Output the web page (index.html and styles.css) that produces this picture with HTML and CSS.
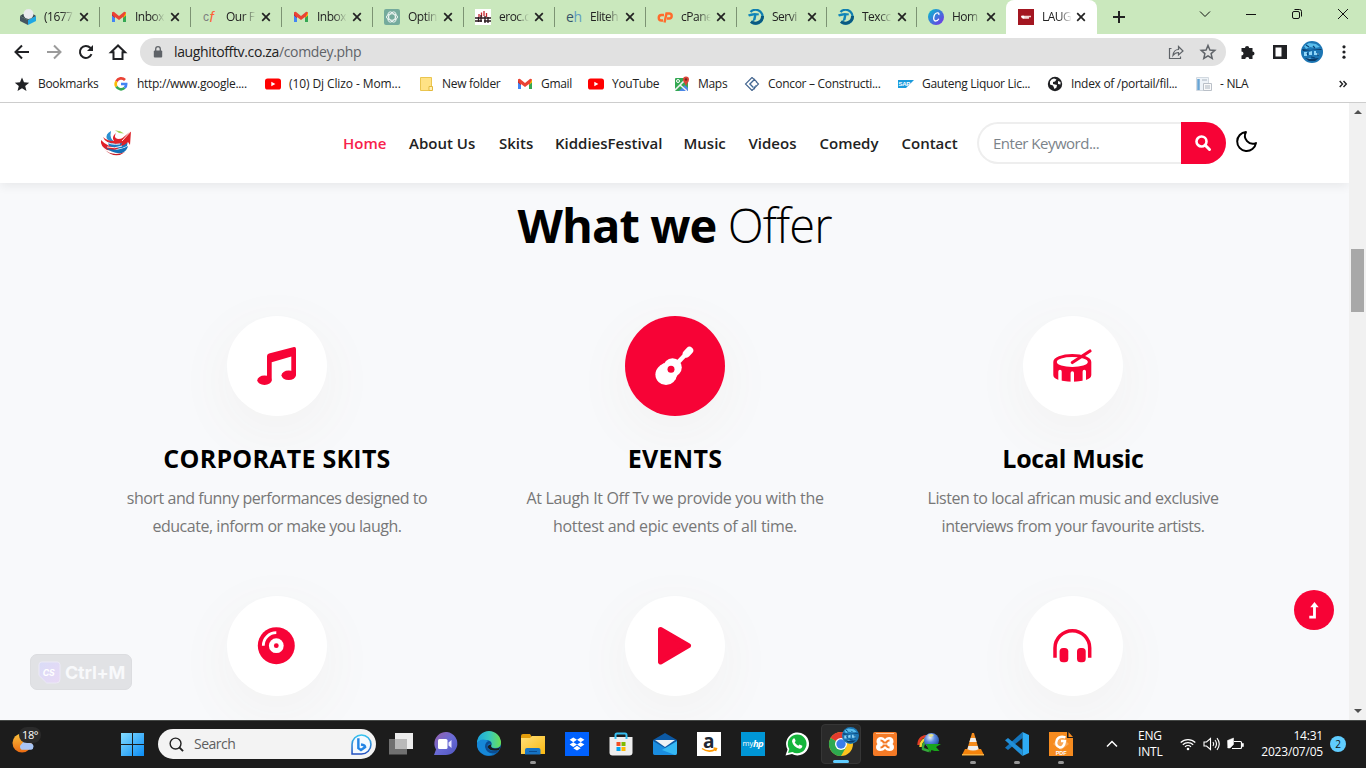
FILE: index.html
```html
<!DOCTYPE html>
<html lang="en">
<head>
    <meta charset="UTF-8">
    <meta name="viewport" content="width=device-width, initial-scale=1.0">
    <title>LAUGH IT OFF TV</title>
    <link rel="stylesheet" href="styles.css">
</head>
<body>

<!-- shared icons -->
<svg class="defs" width="0" height="0">
    <defs>
        <linearGradient id="gSun" x1="0" y1="0" x2="0" y2="1"><stop offset="0" stop-color="#fbc13c"/><stop offset="1" stop-color="#ea6a12"/></linearGradient>
        <linearGradient id="gWin" x1="0" y1="0" x2="1" y2="1"><stop offset="0" stop-color="#84dcff"/><stop offset="1" stop-color="#0a8cf5"/></linearGradient>
        <linearGradient id="gEdge" x1="0" y1="0" x2="1" y2="0"><stop offset="0" stop-color="#1ba5e0"/><stop offset=".5" stop-color="#36c6c0"/><stop offset="1" stop-color="#6be052"/></linearGradient>
        <linearGradient id="gCanva" x1="0" y1="0" x2="1" y2="1"><stop offset="0" stop-color="#00c4cc"/><stop offset="1" stop-color="#7d2ae8"/></linearGradient>
        <linearGradient id="gChat" x1="0" y1="0" x2="1" y2="1"><stop offset="0" stop-color="#9a5fa8"/><stop offset=".5" stop-color="#6a6bd6"/><stop offset="1" stop-color="#4f56c0"/></linearGradient>
        <linearGradient id="gBing" x1="0" y1="0" x2="0" y2="1"><stop offset="0" stop-color="#36c5f0"/><stop offset="1" stop-color="#2450c0"/></linearGradient>
        <linearGradient id="gCs" x1="0" y1="0" x2="1" y2="1"><stop offset="0" stop-color="#d9dcf7"/><stop offset="1" stop-color="#e9d9f5"/></linearGradient>
        <linearGradient id="gFolder" x1="0" y1="0" x2="1" y2="1"><stop offset="0" stop-color="#ffe07a"/><stop offset="1" stop-color="#fbb810"/></linearGradient>
        <radialGradient id="gGlobe" cx=".4" cy=".3" r=".8"><stop offset="0" stop-color="#e6eefc"/><stop offset=".4" stop-color="#5b8ae0"/><stop offset="1" stop-color="#123a8c"/></radialGradient>
    </defs>
    <symbol id="close" viewBox="0 0 10 10"><path d="M1.2 1.2l7.6 7.6M8.8 1.2L1.2 8.8" stroke="#222" stroke-width="1.7"/></symbol>
    <symbol id="gmail" viewBox="0 0 16 16">
        <path d="M1 5v8h3V7z" fill="#4285f4"/><path d="M12 7v6h3V5z" fill="#34a853"/>
        <path d="M1 3.600L4 5v4L1 6.500z" fill="#c5221f"/><path d="M15 3.600L12 5v4l3-2.500z" fill="#fbbc04"/>
        <path d="M1 3.500Q2.500 2 4 3.800L8 7l4-3.200Q13.500 2 15 3.500L12 9V8L8 11 4 8v1L1 5z" fill="#ea4335"/>
    </symbol>
    <symbol id="youtube" viewBox="0 0 16 12"><rect y="0.500" width="16" height="11" rx="2.600" fill="#f00"/><path d="M6.300 3.700L10.400 6 6.300 8.300z" fill="#fff"/></symbol>
    <symbol id="texco" viewBox="0 0 16 16">
        <path d="M2.500 3A7 7 0 1 1 3 13" fill="none" stroke="#0f7fb0" stroke-width="2.200"/>
        <path d="M3 12.500A7 7 0 0 0 14.500 7" fill="none" stroke="#0a5a82" stroke-width="3"/>
        <path d="M0 5.500Q5 3 11 4.500L10.500 6.500 8.500 6.300 7.500 11l-3 1.500L6 6.500 1 7.500z" fill="#1286b8"/>
    </symbol>
    <symbol id="avatar" viewBox="0 0 22 22">
        <circle cx="11" cy="11" r="11" fill="#1c76b4"/>
        <path d="M3 5l5-3 7 1 4 3-5 1-5-1-4 2z" fill="#58bdec"/><path d="M3 11h3v4H3zM8 11l3-1v4H8zM13 10h2v2h3v2h-5zM5 18l4-1 2 2z" fill="#8fd6f8"/><path d="M1 8l8 1 11-1 1 1-9 0-10 1zM4 17l6 1 8-1-4 3H8z" fill="#0a3a68"/><path d="M5 4l3 2M6 12l1 2M12 5l2 2M17 12v3M10 16l4 1" stroke="#0b4377" stroke-width="1.200"/>
    </symbol>
</svg>

<div class="tabs">
    <div class="tab">
        <svg viewBox="0 0 16 16"><path d="M0 7l8 4v5l-8-4z" fill="#455560"/><path d="M16 7l-8 4v5l8-4z" fill="#1ea7e4"/><path d="M0 7l3-2 10 0 3 2-8 4z" fill="#37474f"/><circle cx="8.500" cy="5" r="5" fill="#e9e9ee"/></svg>
        <span>(1677</span><svg class="x"><use href="#close"/></svg>
    </div>
    <div class="tab"><svg><use href="#gmail"/></svg><span>Inbox</span><svg class="x"><use href="#close"/></svg></div>
    <div class="tab">
        <svg viewBox="0 0 16 16"><text x="1" y="12" class="cf-c">c</text><text x="7.500" y="13" class="cf-f">f</text></svg>
        <span>Our F</span><svg class="x"><use href="#close"/></svg>
    </div>
    <div class="tab"><svg><use href="#gmail"/></svg><span>Inbox</span><svg class="x"><use href="#close"/></svg></div>
    <div class="tab">
        <svg viewBox="0 0 16 16"><rect width="16" height="16" rx="2" fill="#74aa9c"/><g fill="none" stroke="#fff" stroke-width=".8"><ellipse cx="8" cy="8" rx="5.600" ry="3.200"/><ellipse cx="8" cy="8" rx="5.600" ry="3.200" transform="rotate(60 8 8)"/><ellipse cx="8" cy="8" rx="5.600" ry="3.200" transform="rotate(120 8 8)"/></g></svg>
        <span>Optin</span><svg class="x"><use href="#close"/></svg>
    </div>
    <div class="tab">
        <svg viewBox="0 0 16 16"><rect width="16" height="16" fill="#fff"/><path d="M4 8V5M6.500 8V3.500M9 7V2M11.500 8V4" stroke="#c4262e" stroke-width="1.300"/><path d="M0 9h16M0 12h7M9 12h7M3.500 8v5M6 6v7M10 7v7M13 8v6" stroke="#2a1a1f" stroke-width="1.300"/></svg>
        <span>eroc.c</span><svg class="x"><use href="#close"/></svg>
    </div>
    <div class="tab">
        <svg viewBox="0 0 16 16"><text x="0" y="13" class="eh" fill="#37556b">e</text><text x="7.500" y="13" class="eh" fill="#5f9dc0">h</text></svg>
        <span>Eliteh</span><svg class="x"><use href="#close"/></svg>
    </div>
    <div class="tab">
        <svg viewBox="0 0 16 16"><g fill="none" stroke="#ff6c2c" stroke-width="2.400"><path d="M7 6H4.500a2.700 2.700 0 0 0 0 5.500H6"/><path d="M7.500 13.500L9.500 4.500h2.700a2.400 2.400 0 0 1 0 5H10"/></g></svg>
        <span>cPane</span><svg class="x"><use href="#close"/></svg>
    </div>
    <div class="tab"><svg><use href="#texco"/></svg><span>Servi</span><svg class="x"><use href="#close"/></svg></div>
    <div class="tab"><svg><use href="#texco"/></svg><span>Texcc</span><svg class="x"><use href="#close"/></svg></div>
    <div class="tab last">
        <svg viewBox="0 0 16 16"><circle cx="8" cy="8" r="8" fill="url(#gCanva)"/><path d="M10.800 6c.6-1.800-.8-2.600-2.300-2C5.500 5 4.500 11.800 7.500 12c1.600 0 2.700-1 3.300-2.200" fill="none" stroke="#fff" stroke-width="1.300"/></svg>
        <span>Hom</span><svg class="x"><use href="#close"/></svg>
    </div>
    <div class="tab active">
        <svg viewBox="0 0 16 16"><rect width="16" height="16" fill="#a31621"/><path d="M3 7.500h10M5 9h6" stroke="#f0d5d5" stroke-width="1.300"/><circle cx="5" cy="8" r="1.500" fill="#fff"/></svg>
        <span>LAUG</span><svg class="x"><use href="#close"/></svg>
    </div>
    <svg class="plus" viewBox="0 0 12 12"><path d="M6 0v12M0 6h12" stroke="#222" stroke-width="2"/></svg>
    <div class="window-buttons">
        <svg viewBox="0 0 12 12"><path d="M1 3.500l5 5 5-5" class="line"/></svg>
        <svg viewBox="0 0 12 12"><path d="M1 6.500h10" class="line"/></svg>
        <svg viewBox="0 0 12 12"><rect x="1.500" y="3.500" width="7" height="7" rx="1.500" class="line"/><path d="M3.500 1.500h5a2 2 0 0 1 2 2v5" class="line"/></svg>
        <svg viewBox="0 0 12 12"><path d="M1 1l10 10M11 1L1 11" class="line"/></svg>
    </div>
</div>

<div class="toolbar">
    <svg class="tool" viewBox="0 0 16 16"><path d="M15 8H2M8 1.500L1.500 8 8 14.500" class="dark"/></svg>
    <svg class="tool" viewBox="0 0 16 16"><path d="M1 8h13M8 1.500L14.500 8 8 14.500" class="gray"/></svg>
    <svg class="tool" viewBox="0 0 16 16"><path d="M13.500 10.200A6 6 0 1 1 12.300 3.800L14 5.500" class="dark"/><path d="M15 1v6H9z" fill="#202124"/></svg>
    <svg class="tool" viewBox="0 0 16 16"><path d="M8 1.500L1 8.200h2.500V15h9V8.200H15z" class="dark"/></svg>
    <div class="address">
        <svg class="lock" viewBox="0 0 10 12"><rect x="0.800" y="4.500" width="8.400" height="7" rx="1" fill="#5f6368"/><path d="M2.700 5V3a2.300 2.300 0 0 1 4.600 0v2" fill="none" stroke="#5f6368" stroke-width="1.300"/></svg>
        <p>laughitofftv.co.za<span>/comdey.php</span></p>
        <svg class="share" viewBox="0 0 16 16"><path d="M3.500 4.500H1.500v10h11v-2M5 11.500C5.500 7 8 5.500 10.500 5.500V2.500L15 7l-4.500 4V8.500C8 8.500 6.500 9.500 5 11.500z" fill="none" stroke="#5f6368" stroke-width="1.200"/></svg>
        <svg class="star" viewBox="0 0 16 16"><path d="M8 1.500l1.900 4.500 4.900.4-3.700 3.200 1.100 4.800L8 11.800l-4.200 2.600 1.100-4.800L1.200 6.400 6.100 6z" fill="none" stroke="#5f6368" stroke-width="1.500"/></svg>
    </div>
    <svg class="tool" viewBox="0 0 16 16"><path d="M1.500 4H5a2 2 0 1 1 4.200 0H12.500v3.500a2 2 0 1 1 0 4V15H9.300a2 2 0 0 0-4 0H1.500v-3.500a2 2 0 1 0 0-4z" fill="#202124"/></svg>
    <svg class="tool" viewBox="0 0 16 16"><path d="M1 1h14v14H1zM3.500 3.500v9H9.500v-9z" fill="#202124" fill-rule="evenodd"/></svg>
    <svg class="me"><use href="#avatar"/></svg>
    <svg class="dots" viewBox="0 0 4 14"><circle cx="2" cy="1.800" r="1.600"/><circle cx="2" cy="7" r="1.600"/><circle cx="2" cy="12.200" r="1.600"/></svg>
</div>

<div class="bookmarks">
    <div><svg viewBox="0 0 16 16"><path d="M8 1.500l2 4.800 5.200.4-4 3.400 1.300 5L8 12.300l-4.500 2.800 1.300-5-4-3.400L6 6.300z" fill="#202124"/></svg><span>Bookmarks</span></div>
    <div><svg viewBox="0 0 16 16"><g fill="none" stroke-width="2.600"><path d="M12 4A5.300 5.300 0 0 0 3.400 5.300" stroke="#ea4335"/><path d="M3.400 5.300a5.300 5.300 0 0 0 0 5.400" stroke="#fbbc05"/><path d="M3.400 10.700a5.300 5.300 0 0 0 8.200 1.200" stroke="#34a853"/><path d="M11.600 11.900A5 5 0 0 0 13.200 8H8" stroke="#4285f4"/></g></svg><span>http://www.google....</span></div>
    <div class="dj"><svg><use href="#youtube"/></svg><span>(10) Dj Clizo - Mom...</span></div>
    <div><svg viewBox="0 0 16 16"><path d="M2.500 1.500h11v13h-11z" fill="#ffe285" stroke="#eac54f"/><path d="M11 14.500V10.500h3.500v4z" fill="#fff0b8" stroke="#e3b93c"/></svg><span>New folder</span></div>
    <div><svg><use href="#gmail"/></svg><span>Gmail</span></div>
    <div><svg><use href="#youtube"/></svg><span>YouTube</span></div>
    <div><svg viewBox="0 0 16 16"><rect x="1" y="2" width="13" height="13" rx="1" fill="#34a853"/><path d="M5 15l6-6 3 3v3z" fill="#4a86e8"/><path d="M1 14L12 3M6 9l7 6" stroke="#f2f2f2" stroke-width="1.600"/><circle cx="4" cy="5" r="1.500" fill="none" stroke="#fff"/><path d="M12 10C11 7 9 6 9 3.500a3 3 0 0 1 6 0C15 6 13 7 12 10z" fill="#db4437"/><circle cx="12" cy="3.500" r="1.200" fill="#7b231e"/></svg><span>Maps</span></div>
    <div><svg viewBox="0 0 16 16"><path d="M8 1.500L1.500 8 8 14.500M11 3L6 8l5 5M8 1.500L13 6M8 14.500L14.500 8 12 5.500" fill="none" stroke="#44658f" stroke-width="1.100"/><path d="M9 4L5 8l4 4 3-3" fill="none" stroke="#88aaca"/></svg><span>Concor – Constructi...</span></div>
    <div><svg viewBox="0 0 16 16"><path d="M0 4h16l-8 8H0z" fill="#1a9bdc"/><text x="0.500" y="10.300" class="sap">SAP</text></svg><span>Gauteng Liquor Lic...</span></div>
    <div><svg viewBox="0 0 16 16"><circle cx="8" cy="8" r="7.200" fill="#202124"/><path d="M3 5.500Q4 3 7 2.500L9.500 3.500 8 5.500 6 6v2l4 1-.5 2.500L7.500 13 6 9.500 3 8.500zM11 5l2.500 1v2.500L11 8z" fill="#fff"/></svg><span>Index of /portail/fil...</span></div>
    <div><svg viewBox="0 0 16 16"><path d="M.5 1.500h12v13H.5z" fill="#eef3f8" stroke="#d2d9e0"/><path d="M2.500 3v11" stroke="#68a5d5" stroke-width="2.500"/><path d="M7.500 7.500h8v7h-8z" fill="#fafafa" stroke="#bac0c8"/><path d="M6 4h5M9 10h5M9 12h5" stroke="#aab4bf"/></svg><span>- NLA</span></div>
    <svg class="more" viewBox="0 0 8 8"><path d="M.7 1L3.500 4 .7 7M4.500 1L7.300 4 4.500 7" fill="none" stroke="#202124" stroke-width="1.400"/></svg>
</div>

<div class="viewport">
    <div class="page">
        <header>
            <svg class="logo" viewBox="0 0 31 27">
                <path d="M14 0.500Q19 0 23 3.500L18 3Q16 1 14 .5z" fill="#a5d45a"/>
                <path d="M10 1Q4 4 6 9q3 3 8 3-6-3-4-11z" fill="#2a8fd0"/>
                <path d="M15 3Q12 8 17 9q6 0 10-3l1 4q-5 5-14 4Q4 13 2 7q4 4 11 4Q10 7 15 3z" fill="#e0252b"/>
                <path d="M7 12q10 5 19-2 1 3 0 6-9 5-18 1z" fill="#1a7cc4"/>
                <path d="M0 10Q-1 16 6 20q8 1 12-2Q6 17 0 10z" fill="#e01f27"/>
                <path d="M19 10l11-9-1 14-2-3q-4 4-8 4 3-3 2-5z" fill="#dd2228"/>
                <path d="M4 17q10 6 23-1-1 5-6 7-10 1-17-6z" fill="#1470b6"/>
                <path d="M3 19q8 8 21 3-10 8-21-3z" fill="#c61f26"/>
                <path d="M2 10.500q8 5 17 3.500M6 17q8 2 15-1M30 1l-9 10M16 5l6 1" stroke="#fff" fill="none" stroke-width=".9"/>
            </svg>
            <nav>
                <a class="current">Home</a>
                <a>About Us</a>
                <a>Skits</a>
                <a>KiddiesFestival</a>
                <a>Music</a>
                <a>Videos</a>
                <a>Comedy</a>
                <a>Contact</a>
            </nav>
            <div class="search">
                <div class="keyword">Enter Keyword...</div>
                <div class="search-button"><svg viewBox="0 0 16 16"><circle cx="6.500" cy="6.500" r="5" fill="none" stroke="#fff" stroke-width="2.600"/><path d="M10 10l4.500 4.500" stroke="#fff" stroke-width="3" stroke-linecap="round"/></svg></div>
            </div>
            <svg class="moon" viewBox="0 0 20 20"><path d="M9.500 1A9 9 0 1 0 19 11.500 7.500 7.500 0 0 1 9.500 1z" fill="none" stroke="#000" stroke-width="1.900" stroke-linejoin="round"/></svg>
        </header>

        <section class="offer">
            <h2>What we <span>Offer</span></h2>
            <div class="services">
                <div class="service">
                    <div class="circle"><svg viewBox="0 0 100 100"><path d="M40 63V40q0-2 2-2.500L67 31q2-.3 2 2V59H64.300V40.500L44.700 46.300V64z"/><ellipse cx="37.500" cy="64.300" rx="7.200" ry="4.700"/><ellipse cx="61.700" cy="59.300" rx="7.200" ry="4.800"/></svg></div>
                    <h4>CORPORATE SKITS</h4>
                    <p>short and funny performances designed to<br>educate, inform or make you laugh.</p>
                </div>
                <div class="service events">
                    <div class="circle on"><svg viewBox="0 0 100 100"><circle cx="41" cy="58.500" r="10.600"/><circle cx="47.500" cy="51.500" r="9.300"/><path d="M34.500 50l4.500-3 14 11-3 6z"/><path d="M50 49.500L62 37" stroke="#fff" stroke-width="4.500"/><path d="M61.500 37.800l3-3.300" stroke="#fff" stroke-width="7.500" stroke-linecap="round"/><circle cx="46" cy="53.300" r="3.500" fill="#f70336"/></svg></div>
                    <h4>EVENTS</h4>
                    <p>At Laugh It Off Tv we provide you with the<br>hottest and epic events of all time.</p>
                </div>
                <div class="service local">
                    <div class="circle"><svg viewBox="0 0 100 100"><path d="M30.300 46a19 8 0 0 1 38 0V59q0 6-19 6.700-19-.7-19-6.700z"/><ellipse cx="49.300" cy="46" rx="15.500" ry="4.900" fill="#fff"/><path d="M37 65V55.500M49.300 67V57M61.300 65V55.500" stroke="#fff" stroke-width="3.400" stroke-linecap="round"/><path d="M49.300 46.500L67 35" stroke="#f70336" stroke-width="3.200" stroke-linecap="round"/></svg></div>
                    <h4>Local Music</h4>
                    <p>Listen to local african music and exclusive<br>interviews from your favourite artists.</p>
                </div>
                <div class="service">
                    <div class="circle"><svg viewBox="0 0 100 100"><circle cx="49.300" cy="49.700" r="18.500"/><circle cx="49.300" cy="49.700" r="7.400" fill="#fff"/><circle cx="49.300" cy="49.700" r="2.400"/><path d="M36.300 49.700A13 13 0 0 1 49.300 36.700" fill="none" stroke="#fff" stroke-width="2.800"/></svg></div>
                </div>
                <div class="service">
                    <div class="circle"><svg viewBox="0 0 100 100"><path d="M35.500 33.500L63.500 49.700 35.500 66z" stroke="#f70336" stroke-width="5" stroke-linejoin="round"/></svg></div>
                </div>
                <div class="service">
                    <div class="circle"><svg viewBox="0 0 100 100"><path d="M32 61.700V52a17.300 17.300 0 0 1 34.700 0v9.700" fill="none" stroke="#f70336" stroke-width="3.500"/><rect x="36.600" y="52" width="8.700" height="14.300" rx="3.500"/><rect x="54" y="52" width="8.700" height="14.300" rx="3.500"/></svg></div>
                </div>
            </div>
        </section>

        <div class="to-top"><svg viewBox="0 0 12 18"><path d="M1 16h5.500V5" fill="none" stroke="#fff" stroke-width="3"/><path d="M6.500 0L11 5.500H2z" fill="#fff"/></svg></div>
        <div class="shortcut">
            <svg viewBox="0 0 24 24"><path d="M4 1h16q3 0 3 3v15q0 4-4 4H9L1 15V4q0-3 3-3z" fill="url(#gCs)" stroke="#eceaf6"/><text x="5" y="15.500" class="cs">CS</text></svg>
            <span>Ctrl+M</span>
        </div>
    </div>
    <div class="scrollbar">
        <svg viewBox="0 0 8 4"><path d="M0 4l4-4 4 4z"/></svg>
        <div class="thumb"></div>
        <svg class="down" viewBox="0 0 8 4"><path d="M0 0l4 4 4-4z"/></svg>
    </div>
</div>

<div class="taskbar">
    <div class="weather">
        <svg viewBox="0 0 24 24"><circle cx="10.500" cy="13" r="10" fill="url(#gSun)"/><path d="M10 20a3.500 3.500 0 0 1 0-6 5 5 0 0 1 8-1q4 0 4.500 3.500 0 3-2.500 3.500z" fill="#a9c5f5"/></svg>
        <span>18°</span>
    </div>
    <svg class="start" viewBox="0 0 23 23"><path d="M0 0h11v11H0zM12 0h11v11H12zM0 12h11v11H0zM12 12h11v11H12z" fill="url(#gWin)"/></svg>
    <div class="task-search">
        <svg viewBox="0 0 16 16"><circle cx="7" cy="7" r="5.800" fill="none" stroke="#222" stroke-width="1.500"/><path d="M11 11l4 4" stroke="#222" stroke-width="2"/></svg>
        <span>Search</span>
        <svg class="bing" viewBox="0 0 20 20"><path d="M1 19V10a9 9 0 1 1 9 9z" fill="#f4faff" stroke="url(#gBing)" stroke-width="1.500"/><path d="M7 4v9.500l2.500 1.700 4-2.700q0-2-4-2.500" fill="none" stroke="#2485e5" stroke-width="2.300"/></svg>
    </div>
    <div class="apps">
        <div><svg viewBox="0 0 24 24"><path d="M6 1h18v16H6z" fill="#ececec"/><path d="M0 7h18v15.500H0z" fill="#707070"/><path d="M6 7h12v10H6z" fill="#b9b9b9"/></svg></div>
        <div><svg viewBox="0 0 24 24"><path d="M1 23l2-5.500A11.500 11.500 0 1 1 12 23z" fill="url(#gChat)"/><rect x="5" y="7" width="9.500" height="10" rx="1.500" fill="#fff"/><path d="M15.500 10.500L18.500 8v8l-3-2.500z" fill="#e8e8ff"/></svg></div>
        <div><svg viewBox="0 0 24 24"><circle cx="12" cy="12" r="12" fill="#0d6fc0"/><path d="M0 11A12 12 0 0 1 24 11q0 5-6 5-5 0-3.500-3.500 0-5-6-4.500Q3 8 0 11z" fill="url(#gEdge)"/><path d="M0 13Q0 8 6 7.500q4 0 5 2-4 2-1.500 7.500Q12 22 19 20 12 26 5 21.500 0 18 0 13z" fill="#1688d8"/><path d="M14.500 12.500q-2-2-4 .5-1 8 11.500 5.500l-3 2.500Q10 23 8 15q0-5 4-6 3 .5 2.500 3.500z" fill="#0b4d92"/><path d="M14.500 12.500q-2 3 3 4 4.500.5 6-2l-1.500 3.500q-9 2-11.500-3 1-3 4-2.500z" fill="#1c1c1c"/></svg></div>
        <div class="open"><svg viewBox="0 0 24 24"><path d="M0 4q0-2 2-2h7l2 3-2 2H0z" fill="#e29c0a"/><path d="M0 6h9l2-2h13v18H0z" fill="url(#gFolder)"/><path d="M4 22.500V18q0-2 2-2h11.500q2 0 2 2v4.500z" fill="#1673c4"/><path d="M8 19.500h8" stroke="#0a4c91"/></svg></div>
        <div><svg viewBox="0 0 24 24"><path d="M0 0h24v24H0z" fill="#0061fe"/><path d="M8.300 5.500l3.700 2.300-3.700 2.400-3.700-2.400zM15.700 5.500l3.700 2.300-3.700 2.400L12 7.800zM8.300 10.200l3.700 2.400-3.700 2.300-3.700-2.300zM15.700 10.200l3.700 2.400-3.700 2.300-3.700-2.300zM12 13.800l3.700 2.400-3.700 2.300-3.700-2.300z" fill="#fff"/></svg></div>
        <div><svg viewBox="0 0 24 24"><path d="M.5 5h23v15.500q0 3-3 3h-17q-3 0-3-3z" fill="#eee"/><path d="M6.500 7V3q0-1.500 1.500-1.500h8q1.500 0 1.500 1.500v4" fill="none" stroke="#35bdf0" stroke-width="2"/><path d="M7.500 10h4v4h-4z" fill="#f25022"/><path d="M12.500 10h4v4h-4z" fill="#7fba00"/><path d="M7.500 15h4v4h-4z" fill="#00a4ef"/><path d="M12.500 15h4v4h-4z" fill="#ffb900"/></svg></div>
        <div><svg viewBox="0 0 24 24"><path d="M0 8l12-7 12 7v14H0z" fill="#0c59a4"/><path d="M2 8h20l-10 7z" fill="#eef2f5"/><path d="M0 9l24 14H1.500Q0 23 0 21z" fill="#1a8de0"/><path d="M24 9L9 18l13 5q2 0 2-2z" fill="#36b8f3"/></svg></div>
        <div><svg viewBox="0 0 24 24"><path d="M0 0h24v24H0z" fill="#fff"/><text x="6" y="15.500" class="amazon">a</text><path d="M5 16.500q7 5 14 .5M16.500 16l3 .5-1 2.500" fill="none" stroke="#f90" stroke-width="1.500"/></svg></div>
        <div><svg viewBox="0 0 24 24"><path d="M0 0h24v24H0z" fill="#0096d6"/><text x="1.500" y="14" class="my">my</text><text x="12" y="15" class="hp">hp</text></svg></div>
        <div><svg viewBox="0 0 24 24"><path d="M.5 23.500l2-6A11.500 11.500 0 1 1 7 22z" fill="#fff"/><path d="M3 21l1.300-4A9.400 9.400 0 1 1 7.500 20z" fill="#15b53c"/><path d="M8.500 6.500q1-.5 1.500.8l.6 1.500q0 .7-.9 1.400 1.200 2.400 3.600 3.500l1.200-1.300 2.800 1.400q.1 2.500-2.700 3Q8.500 15.500 7 9.500q0-2 1.500-3z" fill="#fff"/></svg></div>
        <div class="focus"><svg viewBox="0 0 24 24"><circle cx="12" cy="12" r="12" fill="#fcc31e"/><path d="M12 12L1.600 6A12 12 0 0 1 22.400 6z" fill="#e33b2e"/><path d="M1.600 6A12 12 0 0 0 12 24l5.200-9z" fill="#2da94f"/><path d="M12 6h10.400L17 9z" fill="#e33b2e"/><circle cx="12" cy="12" r="6" fill="#fff"/><circle cx="12" cy="12" r="4.700" fill="#3b7de9"/></svg><svg class="badge" viewBox="0 0 22 22"><use href="#avatar" width="22" height="22"/></svg></div>
        <div><svg viewBox="0 0 24 24"><rect width="24" height="24" rx="2" fill="#f47a26"/><path d="M3 1.500h18" stroke="#ffc79b" stroke-width="1"/><path d="M8 5q2.500 0 4 2 1.500-2 4-2 4.500 0 4.500 4.500 0 1.500-1 2.500 1.500 1 1.500 3 0 4-4.500 4-3 0-4.500-2-1.500 2-4.500 2Q3 19 3 15q0-2 1.500-3-1-1-1-2.500Q3.500 5 8 5z" fill="#fff"/><path d="M7.500 8.500q2.500 0 3 2h3q.5-2 3-2M7.500 15.500q2.500 0 3-2h3q.5 2 3 2" fill="none" stroke="#f47a26" stroke-width="1.800"/></svg></div>
        <div><svg viewBox="0 0 24 24"><path d="M13 4Q2 3 1.500 13" fill="none" stroke="#e33c25" stroke-width="2.500"/><path d="M13 6.500Q4 6 3.500 15" fill="none" stroke="#f5d735" stroke-width="2.500"/><path d="M12 9Q5 10 6 17l6 2" fill="none" stroke="#35a83b" stroke-width="2.500"/><circle cx="14.500" cy="8.500" r="7.500" fill="url(#gGlobe)"/><path d="M11 3q3-2 6 0l-3 2.500z" fill="#e3e08a"/><path d="M9 12l15 0-5 3 3.500 4-5 0-3-1-1.500 3z" fill="#18a51b"/></svg></div>
        <div class="open"><svg viewBox="0 0 24 24"><path d="M4 17h16l3 6H1z" fill="#f5830b"/><path d="M11 1h2l5 17q-6 3-12 0z" fill="#f48b1c"/><path d="M9.600 6h4.800l1.200 4H8.400zM7.300 14h9.400l.8 3.300q-5.500 2.500-11 0z" fill="#eee"/><path d="M1 22h22v1.500H1z" fill="#f9b040"/></svg></div>
        <div class="open"><svg viewBox="0 0 24 24"><path d="M17.500 0v6L3 18l-3-2.200z" fill="#1374bc"/><path d="M3 6L0 8.200 17.500 24v-6z" fill="#2190da"/><path d="M17.500 0L24 3v18l-6.500 3z" fill="#2eabf4"/></svg></div>
        <div class="open"><svg viewBox="0 0 24 24"><path d="M0 0h18v6h6v18H0z" fill="#f68b1f"/><path d="M19.500 0l4.500 5h-4.500z" fill="#f68b1f"/><path d="M12 4l8 8-8 6-8-6z" fill="#f9a654"/><path d="M16.500 5.500Q11 3.500 8 7.500 5.500 14 11 15.500q4 0 5-6.500h-4" fill="none" stroke="#fff" stroke-width="2.400"/><text x="6.700" y="22.500" class="pdf">PDF</text></svg></div>
    </div>
    <div class="tray">
        <svg class="chevron" viewBox="0 0 12 8"><path d="M1 6.500l5-5 5 5" fill="none" stroke="#fff" stroke-width="1.500"/></svg>
        <p class="lang">ENG<br>INTL</p>
        <svg class="wifi" viewBox="0 0 16 14"><g fill="none" stroke="#fff" stroke-width="1.200"><path d="M.7 5.500a10.500 10.500 0 0 1 14.600 0M2.800 7.700a7.500 7.500 0 0 1 10.400 0M5 9.900a4.300 4.300 0 0 1 6 0"/></g><circle cx="8" cy="12" r="1.300" fill="#fff"/></svg>
        <svg class="sound" viewBox="0 0 17 14"><path d="M1 5h2.500L7.500 1.500v11L3.500 9H1zM10 5q1.500 2 0 4M12 3q3 4 0 8M14 1.200q4.500 5.800 0 11.600" fill="none" stroke="#fff" stroke-width="1.100"/></svg>
        <svg class="battery" viewBox="0 0 17 14"><path d="M7 4.500h6.500q1 0 1 1v5q0 1-1 1H5" fill="none" stroke="#fff" stroke-width="1.200"/><path d="M15 6.500h1.500v3H15zM.5 3.500L6.500 1v6.500L3 11H.8zM1 11l3-4" fill="#fff" stroke="#fff" stroke-width=".5"/></svg>
        <p class="clock">14:31<br>2023/07/05</p>
        <span class="count">2</span>
    </div>
</div>

</body>
</html>
```
FILE: styles.css
```css
* {
    box-sizing: border-box;
}
body {
    margin: 0;
    height: 768px;
    display: flex;
    flex-direction: column;
    overflow: hidden;
    font-family: "Open Sans", "Noto Sans", sans-serif;
    font-size: 12px;
    background-color: #fff;
    color: #222;
}
p {
    margin: 0;
}
svg {
    flex-shrink: 0;
    overflow: visible;
}
.defs {
    position: absolute;
}
/* Browser tabs */
.tabs {
    height: 34px;
    background-color: #cae8bd;
    display: flex;
    align-items: center;
    padding-left: 9px;
}
.tab {
    width: 91px;
    height: 34px;
    padding-left: 11px;
    display: flex;
    align-items: center;
    flex-shrink: 0;
    background: linear-gradient(#7c9373, #7c9373) right center / 1px 20px no-repeat;
}
.tab:nth-child(n+9) {
    width: 90px;
}
.tab svg {
    width: 16px;
    height: 16px;
}
.tab span {
    width: 34px;
    margin: 0 1px 1px 8px;
    white-space: nowrap;
    letter-spacing: -0.5px;
    -webkit-mask-image: linear-gradient(to right, #000 50%, transparent 88%);
    mask-image: linear-gradient(to right, #000 50%, transparent 88%);
}
.tab svg.x {
    width: 10px;
    height: 10px;
}
.tab.last {
    width: 89px;
    background: none;
}
.tab.active {
    width: 91px;
    padding-left: 12px;
    background: #fff;
    border-radius: 8px 8px 0 0;
}
.tab.last span, .tab.active span {
    margin-right: 0;
}
.cf-c {
    font: 12px "Liberation Sans", sans-serif;
    fill: #7c7f80;
}
.cf-f {
    font: italic 15px "Liberation Sans", sans-serif;
    fill: #ff6138;
}
.eh {
    font: 14px "Open Sans", sans-serif;
}
.plus {
    width: 12px;
    height: 12px;
    margin-left: 16px;
}
.window-buttons {
    margin-left: auto;
    display: flex;
    gap: 34px;
    padding: 0 17px 6px 0;
}
.window-buttons svg {
    width: 12px;
    height: 12px;
}
.line {
    fill: none;
    stroke: #111;
    stroke-width: 1;
}
/* Toolbar */
.toolbar {
    height: 36px;
    display: flex;
    align-items: center;
    padding: 0 18px 0 14px;
}
.tool {
    width: 16px;
    height: 16px;
    margin-right: 16px;
}
.dark {
    fill: none;
    stroke: #202124;
    stroke-width: 2;
}
.gray {
    fill: none;
    stroke: #9b9b9b;
    stroke-width: 2;
}
.address {
    width: 1086px;
    height: 28px;
    margin: 0 14px 0 -2px;
    padding: 0 10px 0 13px;
    border-radius: 14px;
    background-color: #e1e1e1;
    display: flex;
    align-items: center;
    flex-shrink: 0;
}
.lock {
    width: 10px;
    height: 12px;
}
.address p {
    margin-left: 11px;
    padding-bottom: 1px;
    flex: 1;
    font-size: 14px;
    letter-spacing: -0.35px;
}
.address p span {
    color: #5f6368;
}
.share, .star {
    width: 16px;
    height: 16px;
    margin-left: 16px;
}
.me {
    width: 22px;
    height: 22px;
    margin: 0 19px 0 -3px;
}
.dots {
    width: 4px;
    height: 14px;
    fill: #202124;
}
/* Bookmarks bar */
.bookmarks {
    height: 33px;
    padding: 0 19px 5px 14px;
    border-bottom: 1px solid #cdcdcd;
    display: grid;
    grid-template-columns: 99px 152px 153px 99px 71px 86px 70px 154px 149px 149px 1fr auto;
    align-items: center;
}
.bookmarks div {
    display: flex;
    align-items: center;
    gap: 8px;
    white-space: nowrap;
    letter-spacing: -0.3px;
}
.bookmarks .dj {
    letter-spacing: -0.1px;
}
.bookmarks svg {
    width: 16px;
    height: 16px;
}
.bookmarks .more {
    width: 8px;
    height: 8px;
}
.sap {
    font: bold 6px "Liberation Sans", sans-serif;
    fill: #fff;
}
/* Web page */
.viewport {
    height: 617px;
    display: flex;
}
.page {
    width: 1349px;
    position: relative;
    overflow: hidden;
    background-color: #f8f9fb;
}
header {
    position: relative;
    z-index: 1;
    height: 80px;
    background-color: #fff;
    display: flex;
    align-items: center;
    padding-left: 101px;
    box-shadow: 0 3px 10px rgba(0, 0, 0, 0.07);
}
.logo {
    width: 31px;
    height: 27px;
}
nav {
    width: 634px;
    margin-left: 211px;
    display: grid;
    grid-template-columns: 66px 90px 56px 128.5px 65px 71px 82px 1fr;
}
nav a {
    font-size: 15px;
    font-weight: 600;
    color: #222;
    white-space: nowrap;
}
nav a.current {
    color: #f7214b;
}
.search {
    display: flex;
}
.keyword {
    width: 204px;
    height: 42px;
    padding-left: 14px;
    border: 2px solid #eee;
    border-right: 0;
    border-radius: 21px 0 0 21px;
    font-size: 15px;
    line-height: 38px;
    letter-spacing: -0.5px;
    color: #7b838a;
}
.search-button {
    width: 45px;
    height: 42px;
    border-radius: 0 21px 21px 0;
    background-color: #f70336;
    display: flex;
    align-items: center;
    justify-content: center;
    padding-right: 2px;
}
.search-button svg {
    width: 16px;
    height: 16px;
}
.moon {
    width: 21px;
    height: 21px;
    margin: 0 0 4px 10px;
}
.offer {
    text-align: center;
}
.offer h2 {
    margin: 11px 0 0;
    font-size: 47px;
    line-height: 62px;
    font-weight: 700;
    letter-spacing: -0.9px;
    color: #000;
}
.offer h2 span {
    font-weight: 300;
}
.services {
    width: 1194px;
    margin: 60px 0 0 78px;
    display: grid;
    grid-template-columns: repeat(3, 1fr);
    grid-auto-rows: 280px;
}
.circle {
    width: 100px;
    height: 100px;
    margin: 0 auto;
    border-radius: 50%;
    background-color: #fff;
    fill: #f70336;
    box-shadow: 0 15px 60px rgba(150, 110, 50, 0.055);
}
.circle svg {
    display: block;
    width: 100px;
    height: 100px;
}
.circle.on {
    background-color: #f70336;
    fill: #fff;
}
.service h4 {
    margin: 25px 0 9px;
    font-size: 25px;
    line-height: 34px;
    font-weight: 700;
    letter-spacing: 0.25px;
    color: #000;
}
.service p {
    font-size: 16px;
    line-height: 28px;
    letter-spacing: -0.47px;
    color: #777;
}
.events p {
    letter-spacing: -0.33px;
}
.local h4 {
    letter-spacing: -0.3px;
}
.local p {
    letter-spacing: -0.45px;
}
.to-top {
    position: absolute;
    left: 1294px;
    top: 487px;
    width: 40px;
    height: 40px;
    border-radius: 50%;
    background-color: #f70336;
    display: flex;
    align-items: center;
    justify-content: center;
}
.to-top svg {
    width: 12px;
    height: 17px;
}
.shortcut {
    position: absolute;
    left: 30px;
    top: 551px;
    width: 102px;
    height: 36px;
    border-radius: 7px;
    border: 1px solid #dcdde0;
    background-color: #e1e2e5;
    display: flex;
    align-items: center;
    gap: 4px;
    padding-left: 7px;
    font: bold 18px Inter, sans-serif;
    letter-spacing: -0.2px;
    color: #f8f9fb;
}
.shortcut svg {
    width: 23px;
    height: 23px;
}
.cs {
    font: italic bold 9px Inter, sans-serif;
    fill: #fff;
}
.scrollbar {
    width: 17px;
    background-color: #f1f1f1;
    display: flex;
    flex-direction: column;
    align-items: center;
    padding-top: 7px;
}
.scrollbar svg {
    width: 8px;
    height: 4px;
    fill: #505050;
}
.thumb {
    width: 13px;
    height: 63px;
    margin-top: 135px;
    background-color: #a8a8a8;
}
.scrollbar .down {
    margin: auto 0 7px;
}
/* Taskbar */
.taskbar {
    height: 48px;
    background-color: #1c1c1c;
    border-top: 1px solid #454846;
    padding-bottom: 1px;
    display: flex;
    align-items: center;
    color: #fff;
}
.weather {
    position: relative;
    width: 121px;
    height: 46px;
    padding: 9px 0 0 12px;
}
.weather svg {
    width: 23px;
    height: 24px;
}
.weather span {
    position: absolute;
    left: 19px;
    top: 6px;
    width: 22px;
    height: 16px;
    border-radius: 8px;
    background-color: #2b2b2b;
    font-size: 11px;
    line-height: 15px;
    letter-spacing: -0.5px;
    text-align: center;
}
.start {
    width: 23px;
    height: 23px;
}
.task-search {
    width: 218px;
    height: 30px;
    margin-left: 14px;
    padding: 0 4px 0 11px;
    border-radius: 15px;
    background-color: #f3f3f3;
    display: flex;
    align-items: center;
    font-size: 14px;
    letter-spacing: -0.5px;
    color: #5e5e5e;
}
.task-search svg {
    width: 15px;
    height: 15px;
}
.task-search span {
    margin: 0 auto 1px 10px;
}
.task-search .bing {
    width: 21px;
    height: 21px;
}
.apps {
    display: flex;
    margin-left: 3px;
}
.apps div {
    position: relative;
    width: 44px;
    height: 46px;
    display: flex;
    align-items: center;
    justify-content: center;
}
.apps svg {
    width: 24px;
    height: 24px;
}
.open::after, .focus::after {
    content: "";
    position: absolute;
    left: 19px;
    bottom: 3px;
    width: 6px;
    height: 3px;
    border-radius: 2px;
    background-color: #979797;
}
.apps .focus {
    width: 40px;
    height: 40px;
    margin: 3px 2px;
    border-radius: 4px;
    border: 1px solid #363636;
    background-color: #2a2a2a;
}
.focus::after {
    left: 11px;
    bottom: 0;
    width: 16px;
    background-color: #60cdff;
}
.apps .badge {
    position: absolute;
    left: 20px;
    top: 2px;
    width: 17px;
    height: 17px;
}
.amazon {
    font: bold 19px "Open Sans", sans-serif;
    fill: #1d2733;
}
.my {
    font: 7.5px "Open Sans", sans-serif;
    fill: #fff;
}
.hp {
    font: italic bold 9.5px "Open Sans", sans-serif;
    letter-spacing: -0.8px;
    fill: #fff;
}
.pdf {
    font: bold 5.5px "Liberation Sans", sans-serif;
    fill: #fff;
}
.tray {
    display: flex;
    align-items: center;
    margin-left: 23px;
    line-height: 16px;
    letter-spacing: -0.2px;
}
.chevron {
    width: 12px;
    height: 8px;
}
.lang {
    width: 26px;
    margin-left: 20px;
}
.wifi {
    width: 16px;
    height: 14px;
    margin-left: 16px;
}
.sound {
    width: 17px;
    height: 14px;
    margin-left: 7px;
}
.battery {
    width: 17px;
    height: 14px;
    margin-left: 7px;
}
.clock {
    width: 63px;
    margin-left: 16px;
    text-align: right;
}
.count {
    width: 16px;
    height: 16px;
    margin-left: 7px;
    border-radius: 50%;
    background-color: #60cdff;
    color: #111;
    font-size: 10px;
    text-align: center;
}
```
